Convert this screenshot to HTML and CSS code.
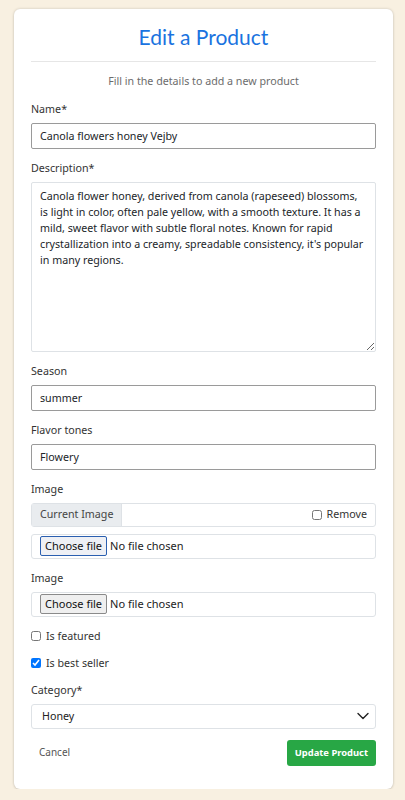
FILE: index.html
```html
<!DOCTYPE html>
<html lang="en">
<head>
<meta charset="utf-8">
<title>Edit a Product</title>
<link rel="stylesheet" href="styles.css">
</head>
<body>
<div class="card">
  <h2 class="title">Edit a Product</h2>
  <hr class="rule">
  <p class="subtitle">Fill in the details to add a new product</p>
  <form class="form">
    <div class="field">
      <label class="label">Name*</label>
      <input class="control control-dark" type="text" value="Canola flowers honey Vejby">
    </div>
    <div class="field">
      <label class="label">Description*</label>
      <textarea class="control textarea">Canola flower honey, derived from canola (rapeseed) blossoms, is light in color, often pale yellow, with a smooth texture. It has a mild, sweet flavor with subtle floral notes. Known for rapid crystallization into a creamy, spreadable consistency, it's popular in many regions.</textarea>
    </div>
    <div class="field">
      <label class="label">Season</label>
      <input class="control control-dark" type="text" value="summer">
    </div>
    <div class="field">
      <label class="label">Flavor tones</label>
      <input class="control control-dark" type="text" value="Flowery">
    </div>
    <div class="field">
      <label class="label">Image</label>
      <div class="group">
        <span class="group-text">Current Image</span>
        <span class="group-body"><label class="check check-inline"><input type="checkbox" class="box"> Remove</label></span>
      </div>
      <div class="file file-focus"><span class="file-btn">Choose file</span><span class="file-name">No file chosen</span></div>
    </div>
    <div class="field">
      <label class="label">Image</label>
      <div class="file"><span class="file-btn">Choose file</span><span class="file-name">No file chosen</span></div>
    </div>
    <label class="check field-check"><input type="checkbox" class="box"> Is featured</label>
    <label class="check field-check"><input type="checkbox" class="box" checked> Is best seller</label>
    <div class="field">
      <label class="label">Category*</label>
      <div class="select">
        <span>Honey</span>
        <svg class="chev" width="12" height="8" viewBox="0 0 12 8"><path d="M1 1.5l5 5 5-5" fill="none" stroke="#222" stroke-width="1.4" stroke-linecap="round" stroke-linejoin="round"/></svg>
      </div>
    </div>
    <div class="actions">
      <a class="cancel">Cancel</a>
      <button type="button" class="submit">Update Product</button>
    </div>
  </form>
</div>
</body>
</html>
```
FILE: styles.css
```css
html, body {
  margin: 0;
  padding: 0;
}
body {
  background: #f8f0e1;
  font-family: "Noto Sans", "Open Sans", sans-serif;
  font-size: 10.7px;
  line-height: 16.5px;
  color: #212529;
}
.card {
  box-sizing: border-box;
  width: 379px;
  margin: 9px 0 0 14px;
  height: 780px;
  background: #fff;
  border-radius: 6px;
  box-shadow: 0 0 3px rgba(0,0,0,0.18), 0 1px 2px rgba(0,0,0,0.08);
  padding: 15px 17px 24px;
}
.title {
  margin: 0;
  text-align: center;
  font-family: "Lato", sans-serif;
  font-weight: 400;
  font-size: 21px;
  line-height: 26px;
  color: #1a73e0;
}
.rule {
  border: 0;
  border-top: 1px solid #e6e6e6;
  margin: 11px 0 0;
}
.subtitle {
  margin: 11px 0 11px;
  text-align: center;
  color: #6c6c6c;
}
.form {
  display: flex;
  flex-direction: column;
}
.field {
  display: flex;
  flex-direction: column;
  margin-bottom: 11px;
}
.label {
  margin-bottom: 5.5px;
  color: #333;
}
.control {
  box-sizing: border-box;
  width: 100%;
  height: 26px;
  border: 1px solid #dee2e6;
  border-radius: 2px;
  padding: 4px 8px;
  font: inherit;
  color: #212529;
  background: #fff;
  outline: none;
}
.control-dark {
  border-color: #9a9a9a;
}
.textarea {
  height: 170px;
  resize: vertical;
  line-height: 16px;
  padding: 5px 11px 6px 8px;
}
.group {
  display: flex;
  height: 24px;
  border: 1px solid #dee2e6;
  border-radius: 3px;
  box-sizing: border-box;
  margin-bottom: 7px;
}
.group-text {
  display: flex;
  align-items: center;
  padding: 0 8px;
  background: #e9ecef;
  border-right: 1px solid #dee2e6;
  color: #444;
}
.group-body {
  flex: 1;
  display: flex;
  justify-content: flex-end;
  align-items: center;
  padding-right: 8px;
}
.check {
  display: flex;
  align-items: center;
  gap: 5px;
  color: #333;
}
.box {
  width: 10px;
  height: 10px;
  margin: 0;
}
.field-check {
  margin-bottom: 10.5px;
}
.file {
  box-sizing: border-box;
  height: 25px;
  border: 1px solid #dee2e6;
  border-radius: 3px;
  display: flex;
  align-items: center;
  padding-left: 8px;
  font-size: 11px;
}
.file-btn {
  box-sizing: border-box;
  height: 20px;
  display: flex;
  align-items: center;
  padding: 0 4px;
  background: #efefef;
  border: 1px solid #8a8a8a;
  border-radius: 2px;
  color: #111;
  margin-right: 3px;
  font-size: 11px;
}
.file-focus .file-btn {
  border-color: #2a5fb0;
  background: #eef0f5;
}
.file-name {
  color: #222;
}
.select {
  box-sizing: border-box;
  height: 25px;
  border: 1px solid #dee2e6;
  border-radius: 3px;
  display: flex;
  align-items: center;
  justify-content: space-between;
  padding: 0 6px 0 10px;
  color: #222;
}
.actions {
  display: flex;
  justify-content: space-between;
  align-items: center;
}
.cancel {
  padding-left: 8px;
  font-size: 10px;
  color: #555;
}
.submit {
  height: 26px;
  padding: 0 8px;
  border: 0;
  border-radius: 3px;
  background: #28a745;
  color: #fff;
  font-family: inherit;
  font-size: 9.4px;
  font-weight: 700;
}
```
